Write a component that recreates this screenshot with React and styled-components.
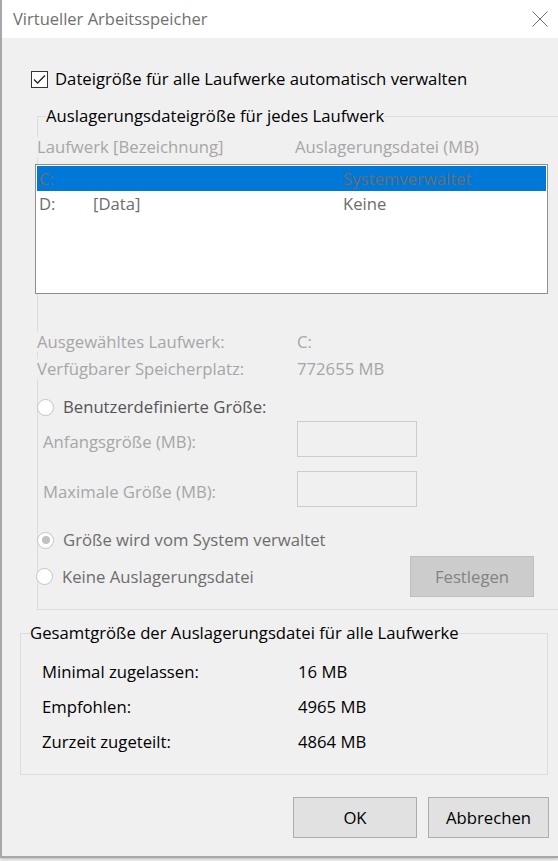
import React from "react";
import styled, { createGlobalStyle } from "styled-components";

const GlobalStyle = createGlobalStyle`
  html, body { margin: 0; padding: 0; background: #f4f4f4; }
  body {
    font-family: "Segoe UI", "Open Sans", "Noto Sans", sans-serif;
    font-size: 16.7px;
    line-height: 20px;
  }
  #root { width: 558px; height: 861px; overflow: hidden; }
  * { box-sizing: border-box; }
`;

const Window = styled.div`
  width: 558px;
  height: 858px;
  border-left: 2px solid #a8a8a8;
  border-bottom: 2px solid #a8a8a8;
  box-shadow: 0 1px 3px rgba(0, 0, 0, 0.25);
  display: flex;
  flex-direction: column;
  overflow: hidden;
  background: #f0f0f0;
`;

const TitleBar = styled.div`
  height: 38px;
  flex: none;
  background: #ffffff;
  display: flex;
  align-items: center;
  justify-content: space-between;
  padding-left: 11px;
  padding-right: 10px;
`;

const Title = styled.span`
  color: #707070;
  font-size: 16.5px;
`;

const CloseIcon = styled.svg`
  width: 16px;
  height: 16px;
  display: block;
`;

const Body = styled.div`
  flex: 1;
  display: flex;
  flex-direction: column;
  background: #f0f0f0;
`;

const CheckRow = styled.label`
  display: flex;
  align-items: center;
  gap: 7px;
  height: 18px;
  margin: 32px 0 0 29px;
  color: #000;
`;

const CheckBox = styled.span`
  width: 17px;
  height: 17px;
  border: 1px solid #333333;
  background: #ffffff;
  display: flex;
  align-items: center;
  justify-content: center;
  flex: none;
`;

const Group = styled.fieldset`
  margin: ${(p) => p.$mt}px 0 0 ${(p) => p.$ml}px;
  width: ${(p) => p.$w}px;
  flex: none;
  padding: 0;
  min-width: 0;
  border: 1px solid #dcdcdc;
  border-right: ${(p) => (p.$open ? "none" : "1px solid #dcdcdc")};
`;

const Legend = styled.legend`
  padding: 0;
  margin-left: ${(p) => p.$ml}px;
  line-height: 20px;
  height: 20px;
  color: #000;
`;

const GroupContent = styled.div`
  display: flex;
  flex-direction: column;
  padding-bottom: 12px;
`;

const Header = styled.div`
  display: grid;
  grid-template-columns: 258px auto;
  justify-content: start;
  margin: 11px 0 0 -1px;
  height: 20px;
  color: #a6a6a6;
  & > span { background: #f0f0f0; }
`;

const ListBox = styled.div`
  margin: 7px 0 0 -3px;
  width: 513px;
  height: 130px;
  border: 1px solid #8e8e8e;
  background: #ffffff;
  padding: 1px;
`;

const ListRow = styled.div`
  display: grid;
  grid-template-columns: 54px 250px 1fr;
  height: 25px;
  align-items: center;
  padding-left: 2px;
  color: #6d6d6d;
  background: ${(p) => (p.$selected ? "#0078d7" : "transparent")};
`;

const InfoGrid = styled.div`
  display: grid;
  grid-template-columns: 260px auto;
  justify-content: start;
  row-gap: 7px;
  margin: 38px 0 0 -1px;
  color: #a6a6a6;
  & > span { background: #f0f0f0; height: 20px; }
`;

const RadioRow = styled.label`
  display: flex;
  align-items: center;
  gap: 9px;
  height: 20px;
  margin: ${(p) => p.$mt}px 0 0 -1px;
  color: ${(p) => p.$color || "#6d6d6d"};
  & > span:last-child { background: #f0f0f0; }
`;

const Radio = styled.span`
  width: 17px;
  height: 17px;
  border-radius: 50%;
  border: 1px solid #c4c4c4;
  background: #ffffff;
  display: flex;
  align-items: center;
  justify-content: center;
  flex: none;
  &::after {
    content: "";
    width: 8px;
    height: 8px;
    border-radius: 50%;
    background: ${(p) => (p.$checked ? "#c2c2c2" : "transparent")};
  }
`;

const FieldRow = styled.div`
  display: grid;
  grid-template-columns: 254px 120px;
  align-items: center;
  margin: ${(p) => p.$mt}px 0 0 5px;
  color: #a6a6a6;
`;

const FieldLabel = styled.span`
  padding-top: 6px;
`;

const TextInput = styled.div`
  width: 120px;
  height: 36px;
  border: 1px solid #cccccc;
  background: #f0f0f0;
`;

const ActionRow = styled.div`
  display: grid;
  grid-template-columns: 373px 124px;
  align-items: center;
  margin: 6px 0 0 -1px;
`;

const Button = styled.button`
  width: ${(p) => p.$w}px;
  height: ${(p) => p.$h}px;
  font-family: inherit;
  font-size: 16.7px;
  line-height: 20px;
  padding: 0;
  border: 1px solid ${(p) => (p.$disabled ? "#bfbfbf" : "#adadad")};
  background: ${(p) => (p.$disabled ? "#cccccc" : "#e1e1e1")};
  color: ${(p) => (p.$disabled ? "#838383" : "#000000")};
`;

const SummaryGrid = styled.div`
  display: grid;
  grid-template-columns: 256px auto;
  justify-content: start;
  row-gap: 15px;
  padding: 19px 0 22px 21px;
  color: #000;
  & > span { height: 20px; }
`;

const ButtonRow = styled.div`
  display: flex;
  justify-content: flex-end;
  gap: 11px;
  padding-right: 9px;
  margin-top: 22px;
`;

export default function App() {
  return (
    <>
      <GlobalStyle />
      <Window>
        <TitleBar>
          <Title>Virtueller Arbeitsspeicher</Title>
          <CloseIcon viewBox="0 0 16 16">
            <path d="M0.5 0.5 L15.5 15.5 M15.5 0.5 L0.5 15.5" stroke="#707070" strokeWidth="1" fill="none" />
          </CloseIcon>
        </TitleBar>
        <Body>
          <CheckRow>
            <CheckBox>
              <svg width="13" height="11" viewBox="0 0 13 11">
                <path d="M1 5.5 L4.5 9 L12 1.5" stroke="#222" strokeWidth="1.3" fill="none" />
              </svg>
            </CheckBox>
            <span>Dateigröße für alle Laufwerke automatisch verwalten</span>
          </CheckRow>

          <Group $mt={18} $ml={35} $w={560} $open>
            <Legend $ml={8}>Auslagerungsdateigröße für jedes Laufwerk</Legend>
            <GroupContent>
              <Header>
                <span>Laufwerk [Bezeichnung]</span>
                <span>Auslagerungsdatei (MB)</span>
              </Header>
              <ListBox>
                <ListRow $selected>
                  <span>C:</span>
                  <span></span>
                  <span>Systemverwaltet</span>
                </ListRow>
                <ListRow>
                  <span>D:</span>
                  <span>[Data]</span>
                  <span>Keine</span>
                </ListRow>
              </ListBox>
              <InfoGrid>
                <span>Ausgewähltes Laufwerk:</span>
                <span>C:</span>
                <span>Verfügbarer Speicherplatz:</span>
                <span>772655 MB</span>
              </InfoGrid>
              <RadioRow $mt={18} $color="#555555">
                <Radio />
                <span>Benutzerdefinierte Größe:</span>
              </RadioRow>
              <FieldRow $mt={4}>
                <FieldLabel>Anfangsgröße (MB):</FieldLabel>
                <TextInput />
              </FieldRow>
              <FieldRow $mt={14}>
                <FieldLabel>Maximale Größe (MB):</FieldLabel>
                <TextInput />
              </FieldRow>
              <RadioRow $mt={23}>
                <Radio $checked />
                <span>Größe wird vom System verwaltet</span>
              </RadioRow>
              <ActionRow>
                <RadioRow $mt={0}>
                  <Radio />
                  <span>Keine Auslagerungsdatei</span>
                </RadioRow>
                <Button $w={124} $h={41} $disabled disabled>
                  Festlegen
                </Button>
              </ActionRow>
            </GroupContent>
          </Group>

          <Group $mt={13} $ml={18} $w={528}>
            <Legend $ml={9}>Gesamtgröße der Auslagerungsdatei für alle Laufwerke</Legend>
            <SummaryGrid>
              <span>Minimal zugelassen:</span>
              <span>16 MB</span>
              <span>Empfohlen:</span>
              <span>4965 MB</span>
              <span>Zurzeit zugeteilt:</span>
              <span>4864 MB</span>
            </SummaryGrid>
          </Group>

          <ButtonRow>
            <Button $w={124} $h={41}>OK</Button>
            <Button $w={121} $h={41}>Abbrechen</Button>
          </ButtonRow>
        </Body>
      </Window>
    </>
  );
}
